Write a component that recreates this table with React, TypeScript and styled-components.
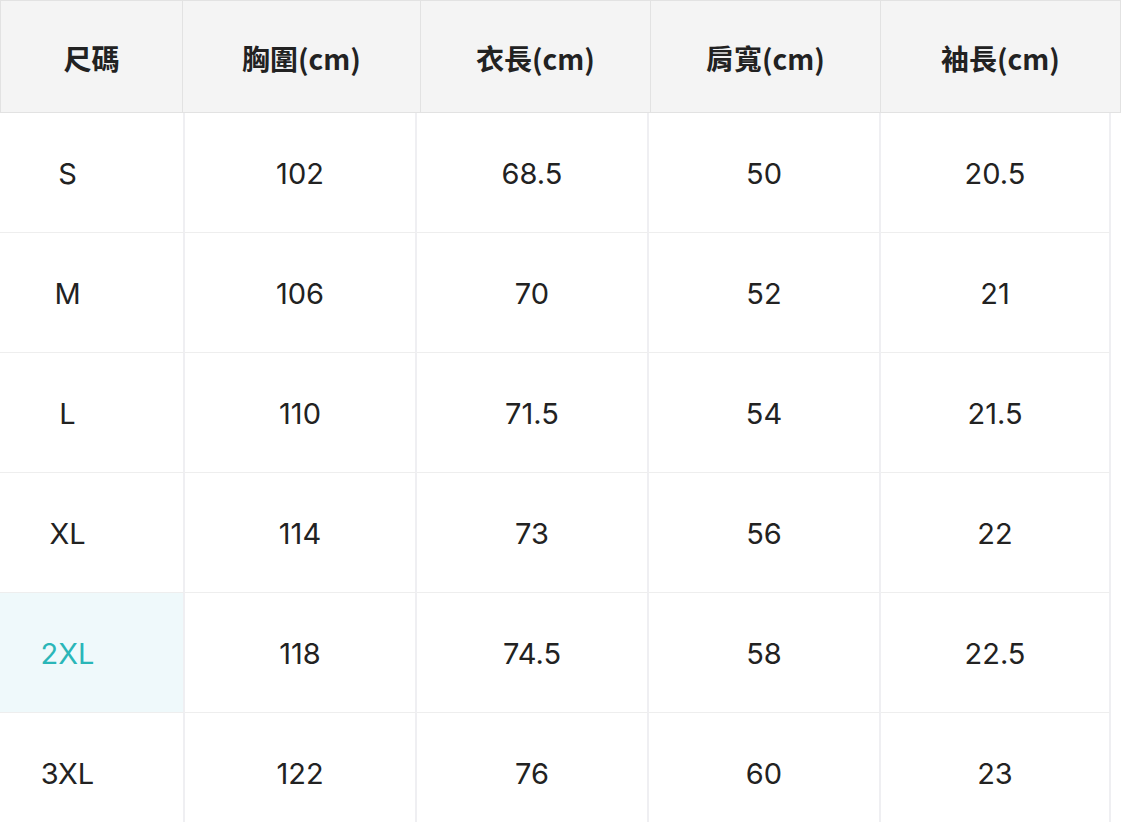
import styled, { createGlobalStyle } from 'styled-components';

const GlobalStyle = createGlobalStyle`
  html, body {
    margin: 0;
    padding: 0;
    background: #ffffff;
  }
  body {
    font-family: Inter, Roboto, "Noto Sans CJK TC", sans-serif;
    color: #222222;
  }
`;

const Page = styled.main`
  width: 1121px;
  height: 822px;
  overflow: hidden;
  display: flex;
  flex-direction: column;
`;

const HeaderRow = styled.div`
  display: grid;
  grid-template-columns: 182px 238px 230px 230px 1fr;
  height: 113px;
  flex-shrink: 0;
  box-sizing: border-box;
  background: #f4f4f4;
  border: 1px solid #e2e2e2;
`;

const HeadCell = styled.div<{ $last?: boolean }>`
  display: flex;
  align-items: center;
  justify-content: center;
  border-right: ${({ $last }) => ($last ? '0' : '1px solid #e2e2e2')};
  font-family: "Noto Sans CJK TC", "Noto Sans", sans-serif;
  font-weight: 700;
  font-size: 28px;
  color: #222222;
  padding-top: 2px;
`;

const Body = styled.div`
  display: grid;
  flex-shrink: 0;
  grid-template-columns: 185px 232px 232px 232px 230px;
  grid-auto-rows: 120px;
  width: 1112px;
`;

const Cell = styled.div<{ $first?: boolean; $active?: boolean }>`
  display: flex;
  align-items: center;
  justify-content: center;
  box-sizing: border-box;
  border-right: 2px solid #efeff2;
  border-bottom: 1px solid #eeeeee;
  padding-right: ${({ $first }) => ($first ? '48px' : '0')};
  padding-top: 2px;
  background: ${({ $active }) => ($active ? '#eff9fb' : '#ffffff')};
  color: ${({ $active }) => ($active ? '#2ab6b8' : '#222222')};
  font-family: Inter, Roboto, sans-serif;
  font-weight: 400;
  font-size: 29px;
`;

const headers = ['尺碼', '胸圍(cm)', '衣長(cm)', '肩寬(cm)', '袖長(cm)'];

const rows = [
  ['S', '102', '68.5', '50', '20.5'],
  ['M', '106', '70', '52', '21'],
  ['L', '110', '71.5', '54', '21.5'],
  ['XL', '114', '73', '56', '22'],
  ['2XL', '118', '74.5', '58', '22.5'],
  ['3XL', '122', '76', '60', '23'],
];

const activeSize = '2XL';

export default function App() {
  return (
    <>
      <GlobalStyle />
      <Page>
        <HeaderRow>
          {headers.map((h, i) => (
            <HeadCell key={h} $last={i === headers.length - 1}>
              {h}
            </HeadCell>
          ))}
        </HeaderRow>
        <Body>
          {rows.map((row) =>
            row.map((value, i) => (
              <Cell
                key={row[0] + i}
                $first={i === 0}
                $active={i === 0 && row[0] === activeSize}
              >
                {value}
              </Cell>
            ))
          )}
        </Body>
      </Page>
    </>
  );
}
